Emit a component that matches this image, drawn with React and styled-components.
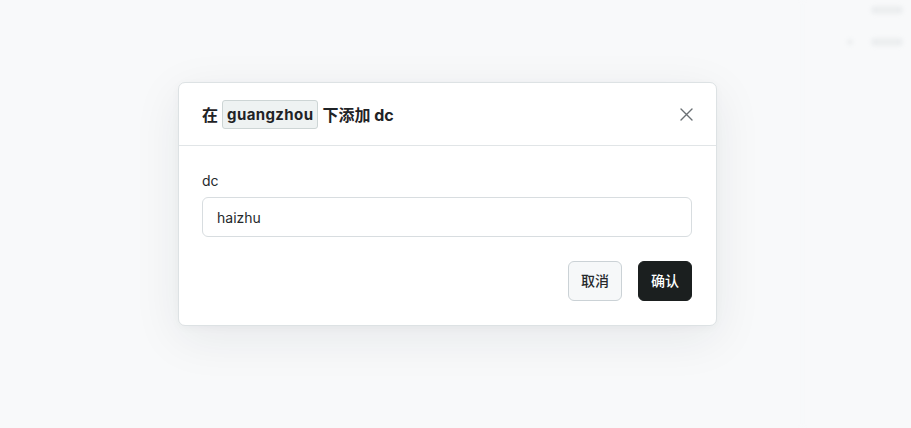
import React from 'react'
import styled, { createGlobalStyle } from 'styled-components'

const GlobalStyle = createGlobalStyle`
  html, body {
    margin: 0;
    padding: 0;
    background: #f8f9fa;
    font-family: Inter, "Noto Sans CJK SC", sans-serif;
  }
`

// Styles
const Page = styled.div`
  position: relative;
  width: 911px;
  height: 428px;
  overflow: hidden;
  background: #f8f9fa;
`

const Backdrop = styled.div`
  display: flex;
  justify-content: flex-end;
  height: 100%;
  filter: blur(2px);
  opacity: 0.35;
`

const SideColumn = styled.div`
  width: 100px;
  border-left: 1px solid #eceff1;
  display: flex;
  flex-direction: column;
  gap: 24px;
  padding: 6px 8px 0 0;
  align-items: flex-end;
`

const GhostRow = styled.div`
  display: flex;
  align-items: center;
  gap: 18px;
`

const GhostDot = styled.div`
  width: 6px;
  height: 6px;
  border-radius: 50%;
  background: #d6dadd;
`

const GhostText = styled.div`
  width: 32px;
  height: 8px;
  border-radius: 3px;
  background: #d6dadd;
`

const Overlay = styled.div`
  position: absolute;
  inset: 0;
  display: flex;
  align-items: flex-start;
  padding: 82px 0 0 178px;
`

const Dialog = styled.div`
  width: 539px;
  background: #ffffff;
  border: 1px solid #dde2e4;
  border-radius: 7px;
  box-shadow: 0 12px 48px rgba(30, 40, 50, 0.08), 0 2px 8px rgba(30, 40, 50, 0.03);
  box-sizing: border-box;
`

const Header = styled.div`
  display: flex;
  align-items: center;
  justify-content: space-between;
  height: 62px;
  padding: 0 20px 0 23px;
  border-bottom: 1px solid #e1e5e7;
`

const Title = styled.div`
  display: flex;
  align-items: center;
  gap: 4px;
  font-size: 16px;
  font-weight: 700;
  color: #1f2326;
`

const Code = styled.span`
  display: inline-flex;
  align-items: center;
  height: 29px;
  padding: 0 4px;
  box-sizing: border-box;
  background: #eef2f2;
  border: 1px solid #cdd5d5;
  border-radius: 3px;
  font-size: 15px;
  font-weight: 700;
  letter-spacing: 0.4px;
`

const CloseButton = styled.button`
  display: flex;
  align-items: center;
  justify-content: center;
  width: 20px;
  height: 20px;
  padding: 0;
  border: none;
  background: none;
  cursor: pointer;
  color: #6b7074;
`

const Body = styled.div`
  padding: 25px 24px 24px 23px;
`

const Label = styled.label`
  display: block;
  font-size: 14px;
  color: #25292c;
  line-height: 20px;
  margin-bottom: 6px;
`

const Input = styled.input`
  display: block;
  width: 100%;
  height: 40px;
  box-sizing: border-box;
  padding: 0 14px;
  border: 1px solid #d8dde0;
  border-radius: 6px;
  font-family: Inter, "Noto Sans CJK SC", sans-serif;
  font-size: 14px;
  color: #25292c;
  outline: none;
`

const Footer = styled.div`
  display: flex;
  justify-content: flex-end;
  gap: 16px;
  margin-top: 24px;
`

const Button = styled.button`
  height: 40px;
  padding: 0 12px 2px;
  border-radius: 6px;
  font-family: Inter, "Noto Sans CJK SC", sans-serif;
  font-size: 14px;
  font-weight: 500;
  cursor: pointer;
  border: 1px solid ${props => props.primary ? '#1b1f1f' : '#cbd2d6'};
  background: ${props => props.primary ? '#1b1f1f' : '#f6f8f9'};
  color: ${props => props.primary ? '#ffffff' : '#25292c'};
`

// Component
const App = () => {
  return (
    <Page>
      <GlobalStyle />
      <Backdrop>
        <SideColumn>
          <GhostRow>
            <GhostText />
          </GhostRow>
          <GhostRow>
            <GhostDot />
            <GhostText />
          </GhostRow>
        </SideColumn>
      </Backdrop>
      <Overlay>
        <Dialog>
          <Header>
            <Title>
              在 <Code>guangzhou</Code> 下添加 dc
            </Title>
            <CloseButton aria-label="close">
              <svg width="13" height="13" viewBox="0 0 13 13" fill="none" stroke="currentColor" strokeWidth="1.4" strokeLinecap="round">
                <path d="M1 1 L12 12 M12 1 L1 12" />
              </svg>
            </CloseButton>
          </Header>
          <Body>
            <Label>dc</Label>
            <Input defaultValue="haizhu" />
            <Footer>
              <Button>取消</Button>
              <Button primary>确认</Button>
            </Footer>
          </Body>
        </Dialog>
      </Overlay>
    </Page>
  )
}

export default App
